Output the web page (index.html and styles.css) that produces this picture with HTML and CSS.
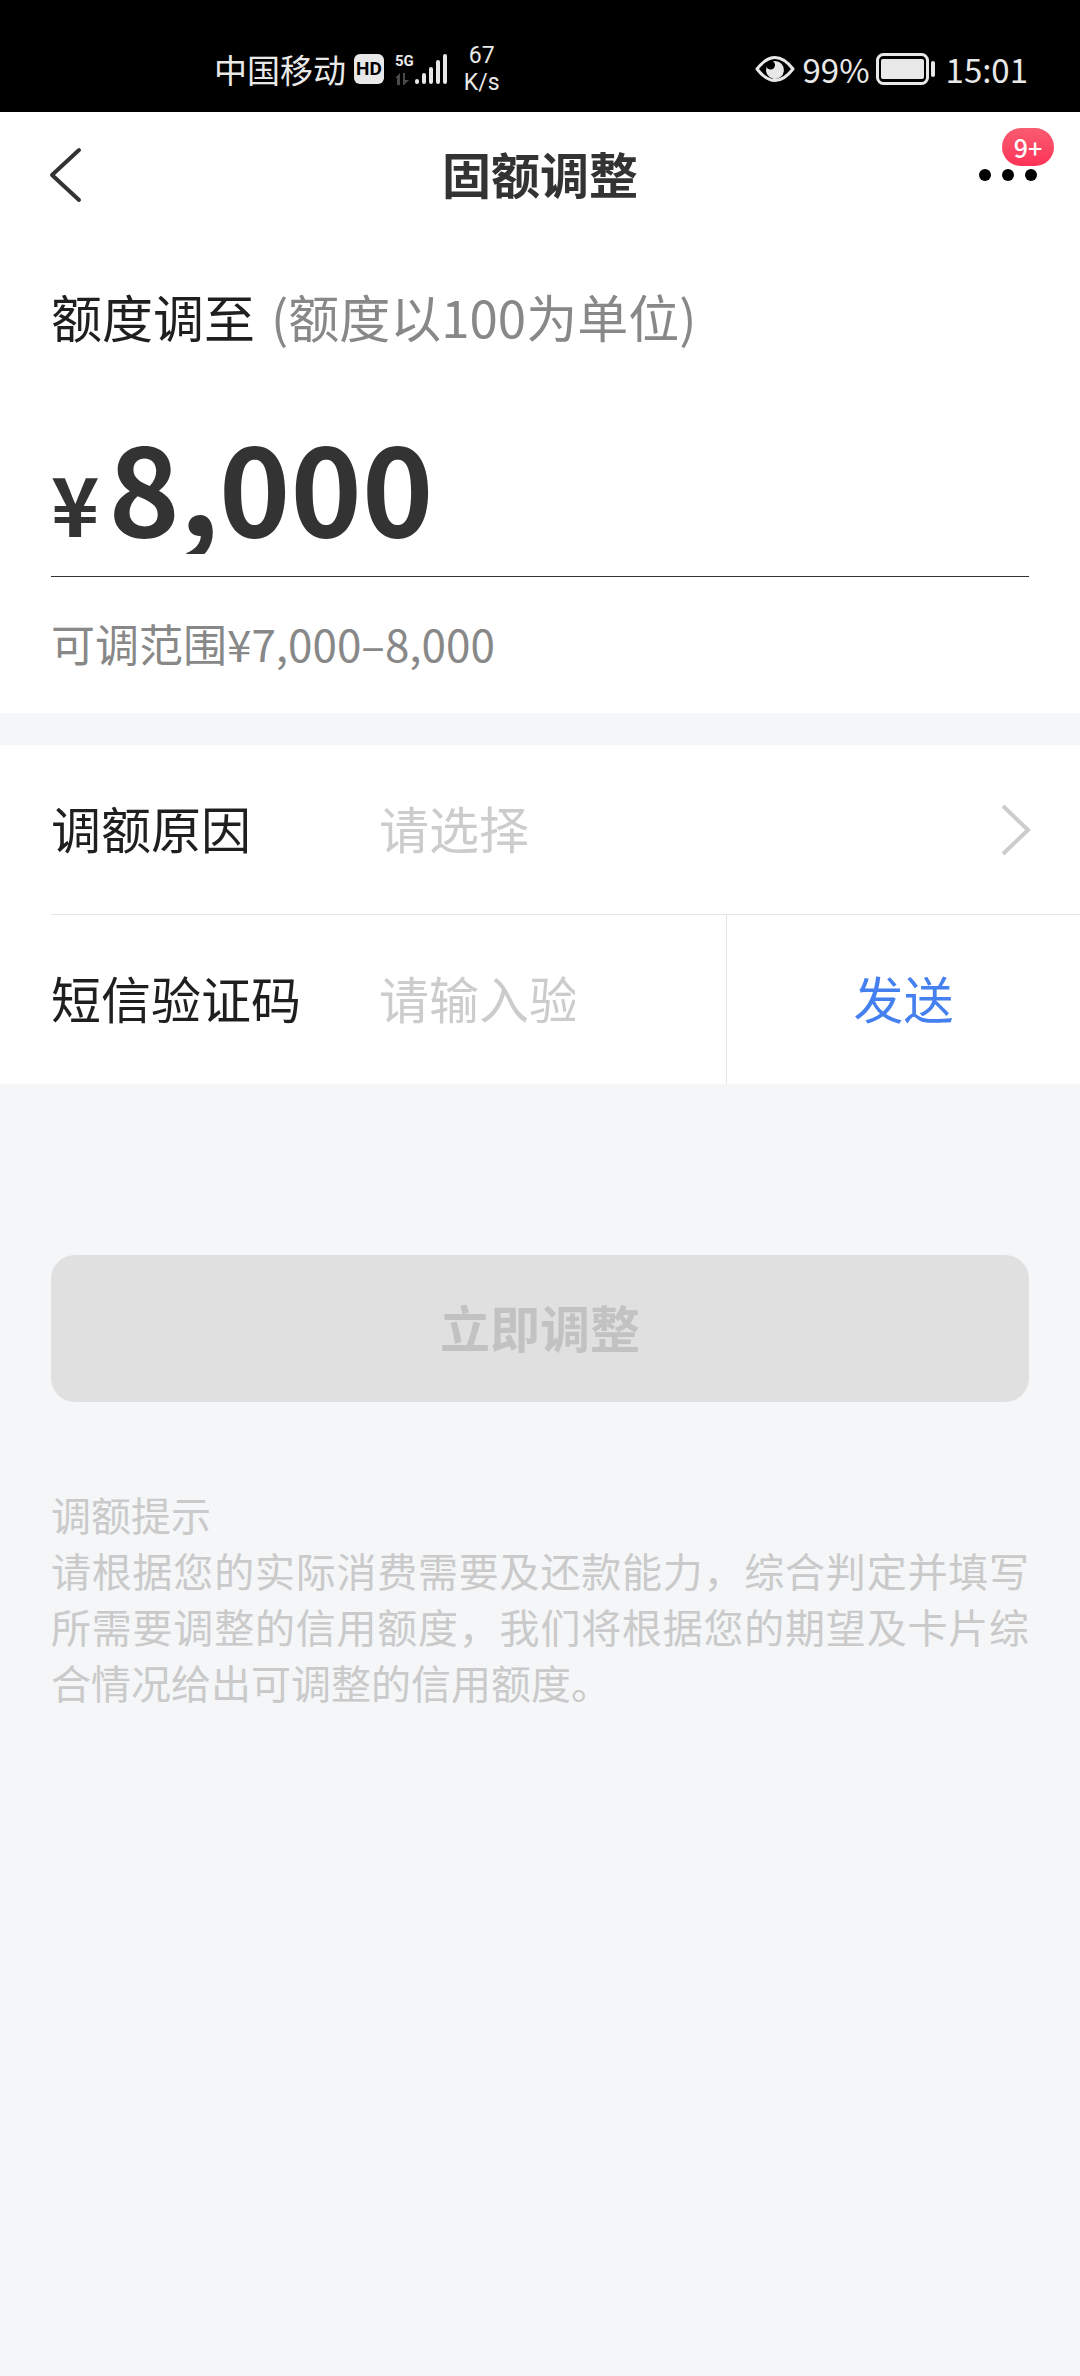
FILE: index.html
```html
<!DOCTYPE html>
<html lang="zh-CN">
  <head>
    <meta charset="UTF-8" />
    <meta name="viewport" content="width=device-width, initial-scale=1" />
    <title>固额调整</title>
    <link rel="stylesheet" href="styles.css">
  </head>
  <body>
    <div class="statusbar">
      <div class="status-left">
        <span>中国移动</span>
        <span class="hd">HD</span>
        <div class="signal">
          <div class="network">
            <span>5G</span>
            <svg width="14" height="12" viewBox="0 0 14 12" fill="#4a4a4a">
              <path d="M0 5 L5 0 V12 H2 V5 Z M8 0 H10 V7 H14 L9 12 H8 Z" />
            </svg>
          </div>
          <svg width="34" height="32" viewBox="0 0 34 32" stroke="#e8e8e8" stroke-width="4" stroke-linecap="round">
            <path d="M3 28 V29 M10 22 V29 M17 16 V29 M24 9 V29 M31 3 V29" />
          </svg>
        </div>
        <div class="speed">
          <span>67</span>
          <span>K/s</span>
        </div>
      </div>
      <div class="status-right">
        <svg width="40" height="28" viewBox="0 0 40 28" fill="none">
          <path d="M2 14 C9 5 14 2.500 20 2.500 S31 5 38 14 C31 23 26 25.500 20 25.500 S9 23 2 14 Z" stroke="#e8e8e8" stroke-width="3" stroke-linejoin="round" />
          <path d="M20 6 A9 9 0 1 1 11.500 12 A4.500 4.500 0 0 0 19 13 A5 5 0 0 0 18 6.300 Z" fill="#e8e8e8" />
        </svg>
        <span class="percent">99%</span>
        <svg width="60" height="32" viewBox="0 0 60 32" fill="none">
          <rect x="1.500" y="1.500" width="50" height="29" rx="6" stroke="#e8e8e8" stroke-width="3" />
          <rect x="5" y="6" width="43" height="20" rx="2" fill="#e8e8e8" />
          <rect x="55" y="8" width="4" height="16" rx="2" fill="#e8e8e8" />
        </svg>
        <span class="clock">15:01</span>
      </div>
    </div>

    <header class="navbar">
      <button class="navbutton" aria-label="返回">
        <svg width="40" height="56" viewBox="0 0 40 56" fill="none" stroke="#333333" stroke-width="4" stroke-linecap="round" stroke-linejoin="round">
          <path d="M37 3 L10 28 L37 53" />
        </svg>
      </button>
      <h1>固额调整</h1>
      <button class="navbutton more" aria-label="更多">
        <svg width="60" height="14" viewBox="0 0 60 14">
          <circle cx="7" cy="7" r="6" />
          <circle cx="30" cy="7" r="6" />
          <circle cx="53" cy="7" r="6" />
        </svg>
        <span class="badge">9+</span>
      </button>
    </header>

    <main>
      <section class="amount">
        <label for="amount">额度调至<span class="hint">(额度以100为单位)</span></label>
        <div class="amountbox">
          <span class="yen">¥</span>
          <input type="text" id="amount" inputmode="numeric" value="8,000" />
        </div>
        <p class="range">可调范围¥7,000–8,000</p>
      </section>

      <section class="form">
        <div class="row reason">
          <label for="reason">调额原因</label>
          <select id="reason">
            <option>请选择</option>
          </select>
          <svg width="30" height="52" viewBox="0 0 30 52" fill="none" stroke="#cccccc" stroke-width="4">
            <path d="M2 2 L27 26 L2 50" />
          </svg>
        </div>
        <div class="row">
          <label for="code">短信验证码</label>
          <input type="text" id="code" placeholder="请输入验证码" />
          <button class="sendbutton">发送</button>
        </div>
      </section>

      <button class="submitbutton" disabled>立即调整</button>

      <div class="tips">
        <p>调额提示</p>
        <p>请根据您的实际消费需要及还款能力，综合判定并填写所需要调整的信用额度，我们将根据您的期望及卡片综合情况给出可调整的信用额度。</p>
      </div>
    </main>
  </body>
</html>
```
FILE: styles.css
```css
* {
  box-sizing: border-box;
}

body {
  margin: 0;
  background-color: #f4f6f8;
  color: #1f1f1f;
  font-family: "Noto Sans CJK SC", sans-serif;
  font-size: 50px;
}

h1,
p {
  margin: 0;
}

button,
input,
select {
  margin: 0;
  padding: 0;
  border: none;
  outline: none;
  background: none;
  color: inherit;
  font: inherit;
}

svg {
  display: block;
  flex-shrink: 0;
}

/* status bar */
.statusbar {
  display: flex;
  justify-content: space-between;
  align-items: center;
  height: 112px;
  padding: 26px 52px 0 214px;
  background-color: #000000;
  color: #e8e8e8;
  font-size: 33px;
  line-height: 40px;
}

.status-left,
.status-right,
.signal {
  display: flex;
  align-items: center;
}

.hd {
  width: 30px;
  margin: 0 11px 0 8px;
  border-radius: 6px;
  background-color: #e8e8e8;
  color: #000000;
  font-family: Roboto, sans-serif;
  font-size: 19px;
  font-weight: 700;
  line-height: 30px;
  text-align: center;
}

.network {
  display: flex;
  flex-direction: column;
  gap: 4px;
  font-family: Roboto, sans-serif;
  font-size: 15px;
  font-weight: 700;
  line-height: 16px;
}

.speed {
  display: flex;
  flex-direction: column;
  margin-left: 16px;
  font-family: Roboto, sans-serif;
  font-size: 23px;
  line-height: 27px;
  text-align: center;
}

.percent {
  margin: 0 6px 0 8px;
}

.clock {
  margin-left: 10px;
}

/* title bar */
.navbar {
  display: grid;
  grid-template-columns: 1fr auto 1fr;
  align-items: center;
  height: 126px;
  padding: 0 42px;
  background-color: #ffffff;
}

h1 {
  padding-bottom: 4px;
  color: #333333;
  font-size: 49px;
  font-weight: 700;
  line-height: 72px;
}

.navbutton {
  position: relative;
  justify-self: start;
}

.more {
  justify-self: end;
}

.badge {
  position: absolute;
  right: -16px;
  bottom: 16px;
  width: 52px;
  border-radius: 19px;
  background: linear-gradient(#f85c70, #ff3358);
  color: #ffffff;
  font-size: 25px;
  font-weight: 500;
  line-height: 38px;
}

/* amount */
.amount {
  padding: 42px 51px 36px;
  background-color: #ffffff;
}

.amount label {
  display: block;
  font-size: 51px;
  line-height: 72px;
}

.hint {
  margin-left: 16px;
  color: #888888;
}

.amountbox {
  display: flex;
  align-items: baseline;
  margin-top: 64px;
  padding-bottom: 22px;
  border-bottom: 1px solid #333333;
  color: #333333;
  font-weight: 700;
}

.yen {
  margin-right: 9px;
  font-size: 82px;
  line-height: 80px;
}

.amountbox input {
  flex: 1;
  min-width: 0;
  height: 138px;
  overflow: clip;
  font-size: 121px;
  line-height: 138px;
}

.range {
  margin-top: 32px;
  color: #888888;
  font-size: 44px;
  line-height: 68px;
}

/* form rows */
.form {
  margin-top: 32px;
  padding-left: 51px;
  background-color: #ffffff;
}

.row {
  display: flex;
  align-items: center;
  height: 169px;
}

.row label,
.row input,
.row select,
.sendbutton,
.submitbutton {
  padding-bottom: 6px;
}

.row label {
  width: 328px;
}

.reason {
  height: 170px;
  padding-right: 49px;
  border-bottom: 1px solid #e5e5e5;
}

.reason select {
  flex: 1;
  appearance: none;
  color: #cccccc;
}

.row input {
  width: 196px;
}

.row input::placeholder {
  color: #cccccc;
  opacity: 1;
}

.sendbutton {
  width: 354px;
  height: 100%;
  margin-left: auto;
  border-left: 1px solid #e5e5e5;
  color: #4480f0;
}

.submitbutton {
  display: block;
  width: calc(100% - 102px);
  height: 147px;
  margin: 171px 51px 0;
  border-radius: 24px;
  background-color: #e0e0e0;
  color: #c2c2c2;
  font-weight: 700;
}

.tips {
  padding: 84px 51px;
  color: #cacaca;
  font-size: 40px;
  line-height: 56px;
  text-align: justify;
}
```
